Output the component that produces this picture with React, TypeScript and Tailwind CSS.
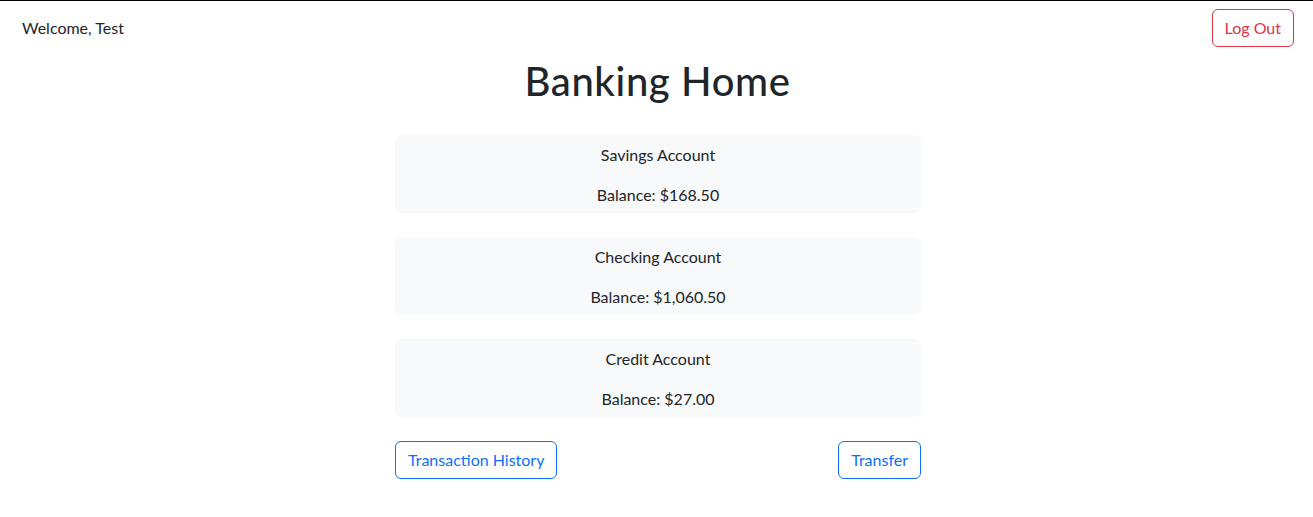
const accounts = [
  { name: 'Savings Account', balance: '$168.50' },
  { name: 'Checking Account', balance: '$1,060.50' },
  { name: 'Credit Account', balance: '$27.00' },
];

export default function App() {
  return (
    <div
      className="min-h-[517px] bg-white border-t border-black text-[#212529] text-base"
      style={{ fontFamily: '"Segoe UI", Lato, "Liberation Sans", sans-serif' }}
    >
      {/* Top bar */}
      <div className="flex items-center justify-between h-[54px] pl-[22px] pr-[19px]">
        <span className="leading-6">Welcome, Test</span>
        <button className="h-[38px] px-3 rounded-md border border-[#dc3545] text-[#dc3545] leading-6">
          Log Out
        </button>
      </div>

      {/* Heading */}
      <h1 className="text-center text-[40px] font-medium tracking-[0.6px] leading-[48px] mt-[2px] mb-[30px] pl-[2px]">
        Banking Home
      </h1>

      {/* Accounts */}
      <div className="flex justify-center pl-[3px]">
        <div className="w-[526px] flex flex-col gap-6">
          {accounts.map((a) => (
            <div key={a.name} className="bg-[#f8f9fa] rounded-md h-[78px] pt-2 text-center">
              <p className="leading-6">{a.name}</p>
              <p className="leading-6 mt-4">Balance: {a.balance}</p>
            </div>
          ))}

          <div className="flex justify-between">
            <button className="h-[38px] px-3 rounded-md border border-[#0d6efd] text-[#0d6efd] leading-6">
              Transaction History
            </button>
            <button className="h-[38px] px-3 rounded-md border border-[#0d6efd] text-[#0d6efd] leading-6">
              Transfer
            </button>
          </div>
        </div>
      </div>
    </div>
  );
}
